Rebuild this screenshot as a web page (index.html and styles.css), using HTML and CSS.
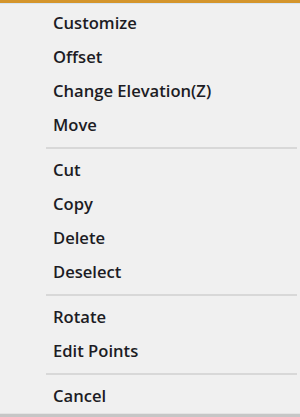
FILE: index.html
```html
<!DOCTYPE html>
<html>
<head>
<meta charset="utf-8">
<link rel="stylesheet" href="styles.css">
</head>
<body>
<div class="menu">
  <div class="topbar"></div>
  <div class="topline"></div>
  <ul class="items">
    <li class="item">Customize</li>
    <li class="item">Offset</li>
    <li class="item">Change Elevation(Z)</li>
    <li class="item">Move</li>
    <li class="sep"></li>
    <li class="item">Cut</li>
    <li class="item">Copy</li>
    <li class="item">Delete</li>
    <li class="item">Deselect</li>
    <li class="sep"></li>
    <li class="item">Rotate</li>
    <li class="item">Edit Points</li>
    <li class="sep"></li>
    <li class="item">Cancel</li>
  </ul>
  <div class="bottom"></div>
</div>
</body>
</html>
```
FILE: styles.css
```css
html, body {
  margin: 0;
  padding: 0;
  background: #f0f0f0;
}
.menu {
  width: 300px;
  height: 417px;
  background: #f0f0f0;
  display: flex;
  flex-direction: column;
  font-family: "Open Sans", "Noto Sans", sans-serif;
  font-size: 16.6px;
  font-weight: 600;
  color: #1c1c24;
}
.topbar {
  height: 3px;
  background: #d4952c;
}
.topline {
  height: 1px;
  background: #d6e4f2;
}
.items {
  list-style: none;
  margin: 0;
  padding: 3px 0 0 0;
  flex: 1;
}
.item {
  height: 34px;
  line-height: 34px;
  padding-left: 53px;
  white-space: nowrap;
}
.sep {
  height: 11px;
  margin-left: 46px;
  margin-right: 3px;
  display: flex;
  align-items: center;
}
.sep::before {
  content: "";
  flex: 1;
  height: 2px;
  background: #d8d8d8;
}
.bottom {
  height: 3px;
  border-top: 1px solid #e4e4e4;
  background: #c6c6c6;
}
```
